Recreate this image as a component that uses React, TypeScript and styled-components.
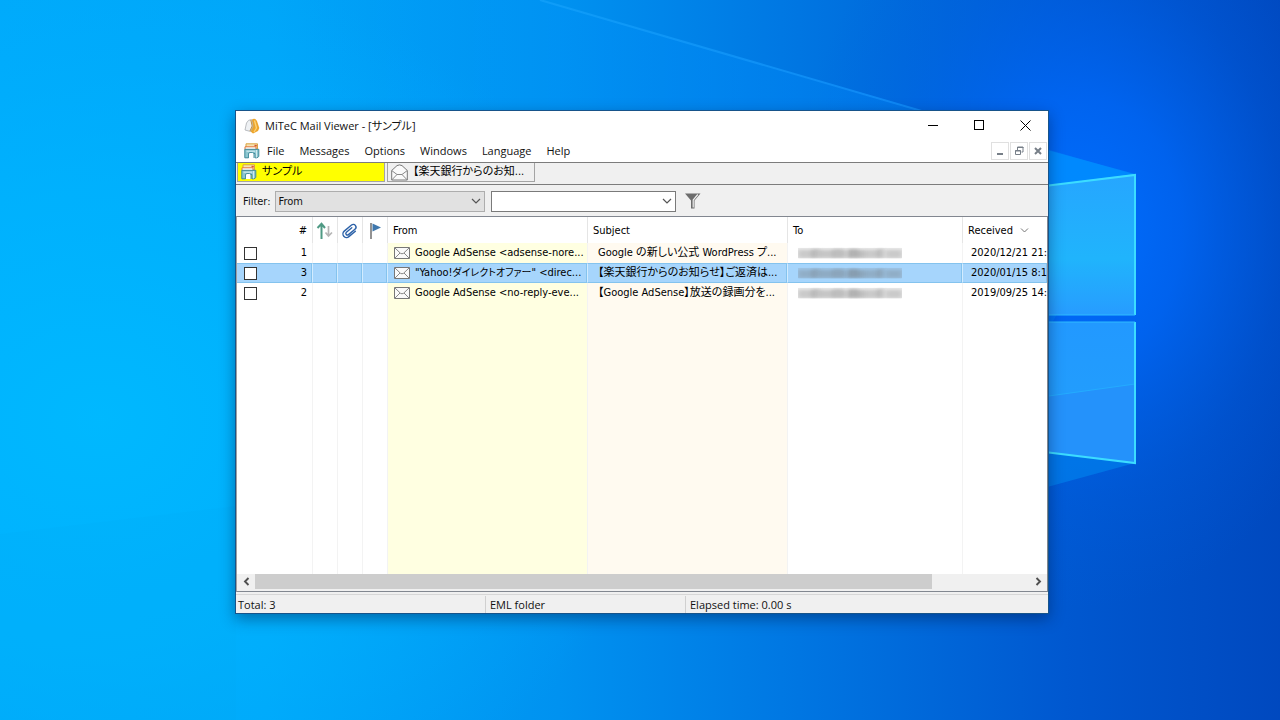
import React from "react";
import styled, { createGlobalStyle } from "styled-components";

const uiFont = `"Open Sans", "Noto Sans CJK JP", sans-serif`;
const listFont = `"DejaVu Sans Condensed", "Noto Sans", "Noto Sans CJK JP", sans-serif`;

const GlobalStyle = createGlobalStyle`
  * { box-sizing: border-box; }
  body { margin: 0; font-family: ${uiFont}; font-size: 11px; color: #111; font-feature-settings: "palt"; }
  button, input, select { font: inherit; color: inherit; margin: 0; padding: 0; border-radius: 0; }
  svg { display: block; flex: none; }
`;

const Desktop = styled.div`
  position: relative;
  display: flex;
  min-height: 100vh;
  padding: 110px 231px 106px 235px;
  background: #007be6;
  overflow: hidden;
`;

const WallpaperSvg = styled.svg`
  position: absolute;
  inset: 0;
  width: 100%;
  height: 100%;
`;

const AppWindow = styled.main`
  position: relative;
  flex: 1;
  min-width: 0;
  display: flex;
  flex-direction: column;
  background: #f0f0f0;
  border: 1px solid #17548a;
  box-shadow: 0 5px 14px rgba(0, 20, 60, 0.42);
`;

const TitleBar = styled.header`
  display: flex;
  align-items: center;
  height: 29px;
  padding-left: 8px;
  background: #fff;
`;

const Title = styled.h1`
  flex: 1;
  margin: 0 0 0 5px;
  font-size: 11px;
  line-height: 16px;
  font-weight: 400;
`;

const CaptionButton = styled.button`
  width: 46px;
  height: 28px;
  border: 0;
  background: none;
  display: grid;
  place-items: center;
`;

const MenuBar = styled.nav`
  display: flex;
  align-items: center;
  height: 22px;
  padding: 0 1px 0 8px;
  background: #fff;
`;

const MenuItem = styled.button`
  border: 0;
  background: none;
  padding: 0 8px 0 7px;
  line-height: 20px;
`;

const MdiGroup = styled.div`
  display: flex;
  gap: 1px;
  margin-left: auto;
`;

const MdiButton = styled.button`
  width: 18px;
  height: 18px;
  border: 1px solid #e0e0e0;
  background: #fff;
  display: grid;
  place-items: center;
`;

const TabStrip = styled.div`
  display: flex;
  align-items: flex-start;
  gap: 2px;
  height: 23px;
  padding-left: 1px;
  border-top: 1px solid #7c7c7c;
  border-bottom: 1px solid #7c7c7c;
`;

const Tab = styled.button<{ $active?: boolean }>`
  display: flex;
  align-items: center;
  gap: 5px;
  width: 148px;
  height: 19px;
  padding-left: 3px;
  border: 1px solid #a4a4a4;
  border-top-width: 0;
  background: ${(p) => (p.$active ? "#ffff00" : "#f0f0f0")};
  color: #000;
  font-family: ${listFont};
  line-height: 18px;
  white-space: nowrap;
`;

const FilterBar = styled.form`
  display: flex;
  align-items: center;
  height: 31px;
  padding: 1px 0 0 7px;
  font-family: ${listFont};
`;

const SelectBox = styled.span`
  display: flex;
  align-items: center;
  width: 210px;
  height: 21px;
  margin: 0 6px 0 4px;
  border: 1px solid #adadad;
  background: #e1e1e1;

  & > select {
    flex: 1;
    height: 19px;
    margin-right: -14px;
    padding: 0 3px;
    border: 0;
    appearance: none;
    background: transparent;
  }
  & > svg { margin-right: 3px; pointer-events: none; }
`;

const ComboBox = styled.span`
  display: flex;
  width: 185px;
  height: 21px;
  border: 1px solid #7a7a7a;
  background: #fff;

  & > input {
    flex: 1;
    min-width: 0;
    padding: 0 3px;
    border: 0;
    background: transparent;
  }
`;

const GlyphButton = styled.button<{ $width: number }>`
  width: ${(p) => p.$width}px;
  border: 0;
  background: none;
  display: grid;
  place-items: center;
`;

const ListFrame = styled.section`
  flex: 1;
  display: flex;
  flex-direction: column;
  min-height: 0;
  border: 1px solid #828790;
  border-left-color: #a0a0a0;
  background: #fff;
  overflow: hidden;
`;

const ListBody = styled.div`
  flex: 1;
  display: grid;
  min-height: 0;
  overflow: hidden;
`;

const MailTable = styled.table`
  width: 100%;
  height: 100%;
  table-layout: fixed;
  border-collapse: separate;
  border-spacing: 0;
  font-family: ${listFont};
  color: #000;
`;

const Column = styled.col<{ $width?: number }>`
  ${(p) => (p.$width ? `width: ${p.$width}px;` : "")}
`;

const HeadCell = styled.th<{ $right?: boolean }>`
  height: 26px;
  padding: 1px 5px 0;
  border-right: 1px solid #e5e5e5;
  background: #fff;
  font-weight: 400;
  text-align: ${(p) => (p.$right ? "right" : "left")};
  white-space: nowrap;
  &:last-child { border-right: 0; }
  & > svg { display: block; margin: 0 -2px; }
`;

const SortLabel = styled.span`
  display: flex;
  align-items: center;
  gap: 7px;
`;

const MailRow = styled.tr<{ $selected?: boolean }>`
  height: 20px;
  & > td {
    height: 20px;
    ${(p) =>
      p.$selected
        ? `background: #a6d5fc; border-top: 1px solid #84c3ee; border-bottom: 1px solid #84c3ee; border-right-color: #d2ecff; box-shadow: inset -1px 0 #84c3ee;`
        : ""}
  }
`;

const Cell = styled.td<{ $tint?: string; $flush?: boolean }>`
  padding: ${(p) => (p.$flush ? "0 0 0 3px" : "0 5px")};
  border-right: 1px solid #f3f3f3;
  background: ${(p) => p.$tint ?? "#fff"};
  overflow: hidden;
  white-space: nowrap;
  line-height: 18px;
  &:last-child { border-right: 0; }
`;

const CellLine = styled.span<{ $between?: boolean }>`
  display: flex;
  align-items: center;
  justify-content: ${(p) => (p.$between ? "space-between" : "flex-start")};
  gap: 5px;
  padding-left: ${(p) => (p.$between ? 2 : 1)}px;
`;

const Kana = styled.span`
  font-size: 10px;
`;

const Indent = styled.span`
  display: block;
  padding-left: 5px;
`;

const Tick = styled.input`
  appearance: none;
  width: 13px;
  height: 13px;
  border: 1px solid #333;
  background: #fff;
`;

const ScrollTrack = styled.div`
  display: flex;
  height: 17px;
  padding-bottom: 2px;
  background: #f0f0f0;
`;

const ScrollLane = styled.div`
  flex: 1;
`;

const ScrollThumb = styled.div`
  width: 87.5%;
  height: 15px;
  background: #cdcdcd;
`;

const StatusBar = styled.footer`
  display: flex;
  height: 19px;
  margin-top: 2px;
  padding-top: 1px;
  border-top: 1px solid #d7d7d7;
  line-height: 18px;
`;

const StatusPane = styled.span<{ $width?: number }>`
  ${(p) => (p.$width ? `width: ${p.$width}px; border-right: 1px solid #d0d0d0;` : "flex: 1;")}
  padding-left: ${(p) => (p.$width === 250 ? 2 : 4)}px;
`;

function Wallpaper() {
  return (
    <WallpaperSvg viewBox="0 0 1280 720" preserveAspectRatio="none" aria-hidden="true">
      <defs>
        <linearGradient id="sky" x1="0" y1="0" x2="1.04" y2="0">
          <stop offset="0" stopColor="#00aafb" />
          <stop offset="0.2" stopColor="#00a6f9" />
          <stop offset="0.42" stopColor="#0092f0" />
          <stop offset="0.6" stopColor="#0076e2" />
          <stop offset="0.8" stopColor="#0058d0" />
          <stop offset="1" stopColor="#0045bb" />
        </linearGradient>
        <radialGradient id="cyan">
          <stop offset="0" stopColor="#00baff" stopOpacity="0.9" />
          <stop offset="0.5" stopColor="#00b6ff" stopOpacity="0.6" />
          <stop offset="1" stopColor="#00b0ff" stopOpacity="0" />
        </radialGradient>
        <radialGradient id="glow">
          <stop offset="0" stopColor="#006eff" />
          <stop offset="0.35" stopColor="#0068fa" stopOpacity="0.75" />
          <stop offset="0.7" stopColor="#0062ec" stopOpacity="0.25" />
          <stop offset="1" stopColor="#005ce0" stopOpacity="0" />
        </radialGradient>
        <linearGradient id="beam" x1="0" y1="0" x2="1" y2="0">
          <stop offset="0" stopColor="#0098ff" stopOpacity="0" />
          <stop offset="0.5" stopColor="#0090ff" stopOpacity="0.5" />
          <stop offset="1" stopColor="#008cff" stopOpacity="0.6" />
        </linearGradient>
        <linearGradient id="edge" x1="0" y1="0" x2="1" y2="0">
          <stop offset="0" stopColor="#18a4fc" stopOpacity="0.6" />
          <stop offset="1" stopColor="#1494ff" stopOpacity="0.7" />
        </linearGradient>
        <linearGradient id="paneTop" x1="0" y1="0" x2="0" y2="1">
          <stop offset="0" stopColor="#26a6ff" />
          <stop offset="0.6" stopColor="#20b4fc" />
          <stop offset="1" stopColor="#279cff" />
        </linearGradient>
        <linearGradient id="paneLow" x1="0" y1="0" x2="0" y2="1">
          <stop offset="0" stopColor="#2299ff" />
          <stop offset="1" stopColor="#22a0fb" />
        </linearGradient>
      </defs>
      <rect width="1280" height="720" fill="url(#sky)" />
      <ellipse cx="100" cy="420" rx="560" ry="460" fill="url(#cyan)" />
      <ellipse cx="1080" cy="230" rx="290" ry="380" fill="url(#glow)" />
      <path d="M540 0 L1135 175 L1048 330 L300 330 L300 0Z" fill="url(#beam)" opacity="0.6" />
      <path d="M540 0 L925 112" stroke="url(#edge)" strokeWidth="2" />
      <path d="M0 534 L236 506 L236 720 L0 720Z" fill="#0098e0" opacity="0.05" />
      <path d="M1040 148 L1135 174 L1040 187Z" fill="#0090ff" opacity="0.75" />
      <path d="M1040 450 L1135 463 L1040 489Z" fill="#0086ee" opacity="0.6" />
      <path d="M1020 189 L1135 174 V315 H1020Z" fill="url(#paneTop)" />
      <path d="M1020 322 H1135 V463 L1020 449Z" fill="url(#paneLow)" />
      <path d="M1020 400 L1135 384 V463 L1020 449Z" fill="#2492fb" />
      <path d="M1020 400 L1135 384" stroke="#24acff" strokeWidth="1" />
      <path d="M1020 189 L1135 175 V315 M1020 449 L1135 463 V322" fill="none" stroke="#3cdcff" strokeWidth="2" />
      <path d="M1020 315 H1135 M1020 322 H1135" stroke="#2fbcff" strokeWidth="1" />
    </WallpaperSvg>
  );
}

const AppIcon = () => (
  <svg width="16" height="16" viewBox="0 0 16 16" aria-hidden="true">
    <path d="M8 1.5 Q11 -.5 13 3 L15.3 10 L14 13 L9 15.5 L6 13Z" fill="#eda52c" />
    <path d="M10.5 2.5 L12.5 10 L10 14" fill="none" stroke="#fbd177" strokeWidth="1.4" />
    <path d="M2.5 5 Q4 1.5 7.5 1.5 L9 8 L6.5 13.5 L1 12Z" fill="#eef1f4" stroke="#a9adb3" strokeWidth=".8" />
    <path d="M6.8 2 L8.2 8 L6 13" fill="none" stroke="#c98f3a" />
  </svg>
);

const MailboxIcon = () => (
  <svg width="16" height="16" viewBox="0 0 16 16" aria-hidden="true">
    <path d="M2 .8 H13.5 V6 H2Z" fill="#f7e3b4" stroke="#d9a441" />
    <path d="M10.5 1.8 H12.8 V3.5 H10.5Z" fill="#d8542f" />
    <path d="M1 3.8 H12 V6.5 H1Z" fill="#fff" stroke="#e0763a" />
    <path d="M.8 6.3 H14.8 V13.5 L13 14.8 H11 V10.5 H4.5 V14.8 H.8Z" fill="#8cc6d0" stroke="#3f8a9a" />
    <path d="M4.5 15 V11 Q4.5 9.5 6 9.5 H8.5 Q10 9.5 10 11 V15" fill="#fff" stroke="#4a93a2" />
    <path d="M12.4 7 V14.5 M2.5 8.2 H11" stroke="#d8eff3" />
  </svg>
);

const OpenMailIcon = () => (
  <svg width="17" height="17" viewBox="0 0 17 17" aria-hidden="true">
    <path d="M.7 6.5 L6 1.6 Q8.5 .2 11 1.6 L16.3 6.5 V16 H.7Z" fill="#fafafa" stroke="#777" />
    <path d="M.7 6.5 L6 10.5 H11 L16.3 6.5 M.7 16 L6 10.5 M16.3 16 L11 10.5" fill="none" stroke="#888" />
  </svg>
);

const MailIcon = () => (
  <svg width="16" height="12" viewBox="0 0 16 12" aria-hidden="true">
    <path d="M.5 .5 H15.5 V11.5 H.5Z" fill="#fafafa" stroke="#777" />
    <path d="M1 1 L6.5 6.3 Q8 7.3 9.5 6.3 L15 1 M1 11 L6 6 M15 11 L10 6" fill="none" stroke="#888" />
  </svg>
);

const Chevron = () => (
  <svg width="10" height="10" viewBox="0 0 10 10" aria-hidden="true">
    <path d="M1 3 L5 7 L9 3" fill="none" stroke="#555" strokeWidth="1.2" />
  </svg>
);

const SortChevron = () => (
  <svg width="9" height="9" viewBox="0 0 9 9" aria-hidden="true">
    <path d="M1 2.5 L4.5 6 L8 2.5" fill="none" stroke="#777" />
  </svg>
);

const ScrollArrow = ({ right }: { right?: boolean }) => (
  <svg width="9" height="9" viewBox="0 0 9 9" aria-hidden="true">
    <path d={right ? "M2.5 1 L6 4.5 L2.5 8" : "M6.5 1 L3 4.5 L6.5 8"} fill="none" stroke="#505050" strokeWidth="1.9" />
  </svg>
);

const FunnelIcon = () => (
  <svg width="16" height="16" viewBox="0 0 16 16" aria-hidden="true">
    <path d="M0 .5 H15.5 L9.5 7.5 V15.5 H6 V7.5Z" fill="#6d6d6d" />
    <path d="M12.8 1.5 L8.2 7 V14.5" fill="none" stroke="#f0f0f0" strokeWidth="1.2" />
  </svg>
);

const ArrowsIcon = () => (
  <svg width="18" height="18" viewBox="0 0 18 18" aria-hidden="true">
    <path d="M5.5 17 V2 M1.5 6 L5.5 1.8 L9 6" fill="none" stroke="#4f9a84" strokeWidth="2" />
    <path d="M12.5 4 V14 M9.5 10.5 L12.5 14 L16 10.5" fill="none" stroke="#b5b5b5" strokeWidth="1.7" />
  </svg>
);

const ClipIcon = () => (
  <svg width="18" height="18" viewBox="0 0 18 18" aria-hidden="true">
    <g transform="rotate(50 9 9)" fill="none" stroke="#2d62a8" strokeWidth="1.4" strokeLinecap="round">
      <path d="M12.6 5 V13.5 A3.6 3.6 0 0 1 5.4 13.5 V4 A2.7 2.7 0 0 1 10.8 4 V12.5 A1.6 1.6 0 0 1 7.6 12.5 V5.5" />
    </g>
  </svg>
);

const FlagIcon = () => (
  <svg width="18" height="18" viewBox="0 0 18 18" aria-hidden="true">
    <path d="M5 1 V17" stroke="#777" strokeWidth="1.6" />
    <path d="M6.5 1.5 L15 5.5 L6.5 9.5Z" fill="#3f78ad" />
  </svg>
);

const smudges: [number, number, number, number][] = [
  [0, 3, 16, 0.24], [14, 2, 8, 0.3], [22, 3, 14, 0.26], [35, 2, 10, 0.32],
  [44, 3, 9, 0.22], [51, 2, 9, 0.4], [59, 3, 8, 0.32], [67, 3, 13, 0.24],
  [79, 2, 7, 0.3], [88, 3, 16, 0.24],
];

const HiddenAddress = ({ id }: { id: string }) => (
  <svg width="104" height="12" viewBox="0 0 104 12" role="img" aria-label="Hidden address">
    <filter id={id} x="-5%" y="-20%" width="110%" height="140%">
      <feGaussianBlur stdDeviation="2 1.4" />
    </filter>
    <rect y="1" width="104" height="10" fill="#777" opacity="0.16" />
    <g filter={`url(#${id})`}>
      {smudges.map(([x, y, w, o]) => (
        <rect key={x} x={x} y={y} width={w} height={11 - y} fill="#666" opacity={o} />
      ))}
    </g>
  </svg>
);

const menus = ["File", "Messages", "Options", "Windows", "Language", "Help"];

const mails = [
  { no: 1, from: "Google AdSense <adsense-nore...", subject: "Google の新しい公式 WordPress プ...", received: "2020/12/21 21:" },
  {
    no: 3,
    from: <>"Yahoo!<Kana>ダイレクトオファー</Kana>" &lt;direc...</>,
    subject: "【楽天銀行からのお知らせ】ご返済は...",
    received: "2020/01/15 8:1",
    selected: true,
  },
  { no: 2, from: "Google AdSense <no-reply-eve...", subject: "【Google AdSense】放送の録画分を...", received: "2019/09/25 14:" },
];

const yellow = "#ffffe1";
const cream = "#fffaf0";
const columnTints = [undefined, undefined, undefined, undefined, yellow, cream, undefined, undefined];

export default function App() {
  return (
    <>
      <GlobalStyle />
      <Desktop>
        <Wallpaper />
        <AppWindow>
          <TitleBar>
            <AppIcon />
            <Title>MiTeC Mail Viewer - [サンプル]</Title>
            <CaptionButton aria-label="Minimize">
              <svg width="11" height="11"><path d="M0 5.5 H10" stroke="#000" /></svg>
            </CaptionButton>
            <CaptionButton aria-label="Maximize">
              <svg width="11" height="11"><rect x=".5" y=".5" width="9" height="9" fill="none" stroke="#000" /></svg>
            </CaptionButton>
            <CaptionButton aria-label="Close">
              <svg width="11" height="11"><path d="M.5 .5 L10.5 10.5 M10.5 .5 L.5 10.5" stroke="#000" strokeWidth="1" /></svg>
            </CaptionButton>
          </TitleBar>
          <MenuBar>
            <MailboxIcon />
            {menus.map((m) => (
              <MenuItem key={m}>{m}</MenuItem>
            ))}
            <MdiGroup>
              <MdiButton aria-label="Minimize document">
                <svg width="10" height="10"><path d="M2 8 H8" stroke="#777f88" strokeWidth="2" /></svg>
              </MdiButton>
              <MdiButton aria-label="Restore document">
                <svg width="10" height="10" fill="none" stroke="#777f88">
                  <path d="M3.5 4 V1 H9 V6 H7.5 M3 1.5 H9.5 M1.5 4.5 H6.5 V8.5 H1.5Z M1 5 H7" />
                </svg>
              </MdiButton>
              <MdiButton aria-label="Close document">
                <svg width="10" height="10"><path d="M2 2 L8 8 M8 2 L2 8" stroke="#777f88" strokeWidth="2" /></svg>
              </MdiButton>
            </MdiGroup>
          </MenuBar>
          <TabStrip>
            <Tab $active>
              <MailboxIcon />
              サンプル
            </Tab>
            <Tab>
              <OpenMailIcon />
              【楽天銀行からのお知...
            </Tab>
          </TabStrip>
          <FilterBar onSubmit={(e) => e.preventDefault()}>
            <label htmlFor="field">Filter:</label>
            <SelectBox>
              <select id="field" defaultValue="From">
                <option>From</option>
                <option>Subject</option>
                <option>To</option>
              </select>
              <Chevron />
            </SelectBox>
            <ComboBox>
              <input type="text" aria-label="Filter text" />
              <GlyphButton type="button" $width={16} aria-label="Filter history">
                <Chevron />
              </GlyphButton>
            </ComboBox>
            <GlyphButton type="submit" $width={34} aria-label="Apply filter">
              <FunnelIcon />
            </GlyphButton>
          </FilterBar>
          <ListFrame>
            <ListBody>
              <MailTable>
                <colgroup>
                  <Column $width={76} />
                  <Column $width={25} />
                  <Column $width={25} />
                  <Column $width={25} />
                  <Column $width={200} />
                  <Column $width={200} />
                  <Column $width={175} />
                  <Column />
                </colgroup>
                <thead>
                  <tr>
                    <HeadCell $right>#</HeadCell>
                    <HeadCell aria-label="Direction"><ArrowsIcon /></HeadCell>
                    <HeadCell aria-label="Attachment"><ClipIcon /></HeadCell>
                    <HeadCell aria-label="Flag"><FlagIcon /></HeadCell>
                    <HeadCell>From</HeadCell>
                    <HeadCell>Subject</HeadCell>
                    <HeadCell>To</HeadCell>
                    <HeadCell>
                      <SortLabel>Received <SortChevron /></SortLabel>
                    </HeadCell>
                  </tr>
                </thead>
                <tbody>
                  {mails.map((m) => (
                    <MailRow key={m.no} $selected={m.selected}>
                      <Cell>
                        <CellLine $between>
                          <Tick type="checkbox" aria-label={`Select message ${m.no}`} />
                          {m.no}
                        </CellLine>
                      </Cell>
                      <Cell />
                      <Cell />
                      <Cell />
                      <Cell $tint={yellow}>
                        <CellLine><MailIcon /><span>{m.from}</span></CellLine>
                      </Cell>
                      <Cell $tint={cream}>
                        <Indent>{m.subject}</Indent>
                      </Cell>
                      <Cell>
                        <Indent><HiddenAddress id={`soft${m.no}`} /></Indent>
                      </Cell>
                      <Cell $flush>
                        <Indent>{m.received}</Indent>
                      </Cell>
                    </MailRow>
                  ))}
                  <tr aria-hidden="true">
                    {columnTints.map((tint, i) => (
                      <Cell key={i} $tint={tint} />
                    ))}
                  </tr>
                </tbody>
              </MailTable>
            </ListBody>
            <ScrollTrack>
              <GlyphButton $width={18} aria-label="Scroll left"><ScrollArrow /></GlyphButton>
              <ScrollLane><ScrollThumb /></ScrollLane>
              <GlyphButton $width={18} aria-label="Scroll right"><ScrollArrow right /></GlyphButton>
            </ScrollTrack>
          </ListFrame>
          <StatusBar>
            <StatusPane $width={250}>Total: 3</StatusPane>
            <StatusPane $width={200}>EML folder</StatusPane>
            <StatusPane>Elapsed time: 0.00 s</StatusPane>
          </StatusBar>
        </AppWindow>
      </Desktop>
    </>
  );
}
